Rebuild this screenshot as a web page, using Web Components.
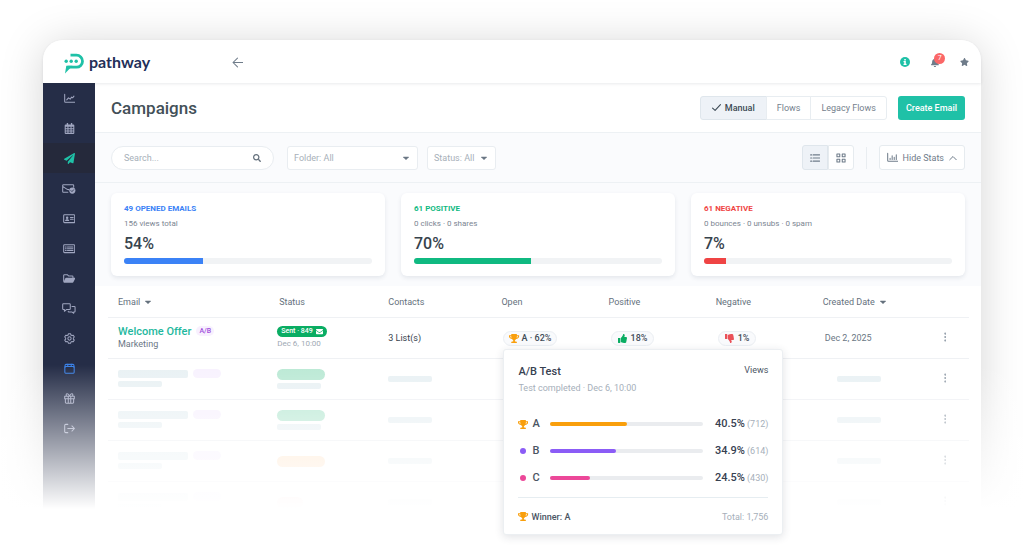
<!DOCTYPE html>
<html lang="en">
<head>
<meta charset="utf-8">
<meta name="viewport" content="width=device-width, initial-scale=1">
<title>Campaigns</title>
<style>
    body {
        margin: 0;
        background: #fff;
        font-family: Roboto, sans-serif;
        font-size: 9px;
        line-height: 12px;
        color: #6b7785;
    }
</style>
</head>
<body>
<campaign-app></campaign-app>

<script>
const ICONS = {
    plane: ['0 0 512 512', '<path fill="currentColor" d="M476 3.2L12.5 270.6c-18.1 10.4-15.8 35.6 2.2 43.2L121 358.4l287.3-253.2c5.5-4.9 13.3 2.6 8.6 8.3L176 407v80.5c0 23.6 28.5 32.9 42.5 15.8L282 426l124.6 52.2c14.2 6 30.4-2.9 33-18.2l72-432C515 7.8 493.3-6.8 476 3.2z"/>'],
    bell: ['0 0 448 512', '<path fill="currentColor" d="M224 512c35.3 0 64-28.7 64-64H160c0 35.3 28.7 64 64 64zm215.4-149.7c-19.3-20.8-55.5-52-55.5-154.3 0-77.7-54.5-139.9-127.9-155.2V32c0-17.7-14.3-32-32-32s-32 14.3-32 32v20.8C118.6 68.1 64.1 130.3 64.1 208c0 102.3-36.2 133.5-55.5 154.3-6 6.4-8.7 14.2-8.6 21.7.1 16.4 13 32 32.1 32h383.8c19.1 0 32-15.6 32.1-32 .1-7.5-2.6-15.3-8.6-21.7z"/>'],
    star: ['0 0 576 512', '<path fill="currentColor" d="M259.3 17.8L194 150.2 47.9 171.5c-26.2 3.8-36.7 36.1-17.7 54.6l105.7 103-25 145.5c-4.5 26.3 23.2 46 46.4 33.7L288 439.6l130.7 68.7c23.2 12.2 50.9-7.4 46.4-33.7l-25-145.5 105.7-103c19-18.5 8.5-50.8-17.7-54.6L382 150.2 316.7 17.8c-11.7-23.6-45.6-23.9-57.4 0z"/>'],
    trophy: ['0 0 576 512', '<path fill="currentColor" d="M552 64H448V24c0-13.3-10.7-24-24-24H152c-13.3 0-24 10.7-24 24v40H24C10.7 64 0 74.7 0 88v56c0 35.7 22.5 72.4 61.9 100.7 31.5 22.7 69.8 37.1 110 41.7C203.3 338.5 240 360 240 360v72h-48c-35.3 0-64 20.7-64 56v12c0 6.6 5.4 12 12 12h296c6.6 0 12-5.4 12-12v-12c0-35.3-28.7-56-64-56h-48v-72s36.7-21.5 68.1-73.6c40.3-4.6 78.6-19 110-41.7 39.3-28.3 61.9-65 61.9-100.7V88c0-13.3-10.7-24-24-24zM99.3 192.8C74.9 175.2 64 155.6 64 144v-16h64.2c1 32.6 5.8 61.2 12.8 86.2-15.1-5.2-29.2-12.4-41.7-21.4zM512 144c0 16.1-17.7 36.1-35.3 48.8-12.5 9-26.7 16.2-41.8 21.4 7-25 11.8-53.6 12.8-86.2H512v16z"/>'],
    up: ['0 0 512 512', '<path fill="currentColor" d="M104 224H24c-13.3 0-24 10.7-24 24v240c0 13.3 10.7 24 24 24h80c13.3 0 24-10.7 24-24V248c0-13.3-10.7-24-24-24zM384 81.5c0 42.4-26 66.2-33.3 94.5h101.7c33.4 0 59.4 27.7 59.6 58.1.1 17.9-7.5 37.2-19.4 49.2l-.1.1c9.8 23.3 8.2 56-9.3 79.5 8.7 25.9-.1 57.7-16.4 74.8 4.3 17.6 2.2 32.6-6.1 44.6C440.2 511.6 389.6 512 346.8 512H344c-48.3 0-87.8-17.6-119.6-31.7-16-7.1-36.8-15.9-52.7-16.2-6.5-.1-11.7-5.5-11.7-12V238.3c0-3.2 1.3-6.3 3.6-8.5 39.6-39.1 56.6-80.6 89.1-113.1 14.8-14.8 20.2-37.2 25.4-58.9C282.5 39.3 291.8 0 312 0c24 0 72 8 72 81.5z"/>'],
    search: ['0 0 512 512', '<path fill="currentColor" d="M505 442.7L405.3 343c-4.5-4.5-10.6-7-17-7H372c27.6-35.3 44-79.7 44-128C416 93.1 322.9 0 208 0S0 93.1 0 208s93.1 208 208 208c48.3 0 92.7-16.4 128-44v16.3c0 6.4 2.5 12.5 7 17l99.7 99.7c9.4 9.4 24.6 9.4 33.9 0l28.3-28.3c9.4-9.4 9.4-24.6.1-34zM208 336c-70.7 0-128-57.2-128-128 0-70.7 57.2-128 128-128 70.7 0 128 57.2 128 128 0 70.7-57.2 128-128 128z"/>'],
    line: ['0 0 16 16', '<path d="M1 2v10.5a1 1 0 0 0 1 1h13.5M4 10l2.5-3 2.5 2 2-3 1.5 1L14.500 4.500"/>'],
    bars: ['0 0 16 16', '<path d="M1 2v10.5a1 1 0 0 0 1 1h13.5M4.500 11V9M7.500 11V5.500M10.500 11V7.500M13.500 11V4"/>'],
    calendar: ['0 0 16 16', '<path fill="currentColor" stroke="none" fill-rule="evenodd" d="M4 0h2v2h4V0h2v2h1.500a1.500 1.500 0 0 1 1.500 1.500v11a1.500 1.500 0 0 1-1.500 1.500h-11A1.500 1.500 0 0 1 1 14.500v-11A1.500 1.500 0 0 1 2.500 2H4zM2.500 5.500v2h2.500v-2zm4 0v2h3v-2zm4.500 0v2h2.500v-2zM2.500 9v2h2.500V9zm4 0v2h3V9zM11 9v2h2.500V9zM2.500 12.300v2h2.500v-2zm4 0v2h3v-2zm4.500 0v2h2.500v-2z"/>'],
    mailcheck: ['0 0 20 16', '<path d="M8.500 13.500H2.200A1.200 1.200 0 0 1 1 12.300V3.700a1.200 1.200 0 0 1 1.200-1.200h13.600A1.200 1.200 0 0 1 17 3.700V6M1 5l6.500 4.200c1 .5 2 .5 2.500.2"/><circle cx="15" cy="11" r="4.500" fill="currentColor" stroke="none"/><path d="M13 11l1.500 1.500L17 9.800" style="stroke:#252d47;stroke-width:1.2"/>'],
    card: ['0 0 18 16', '<rect x="1" y="2.500" width="16" height="11.500" rx="1.200"/><circle cx="6" cy="6.800" r="1.800" fill="currentColor" stroke="none"/><path fill="currentColor" stroke="none" d="M3 11.700c0-2 1.200-2.700 3-2.700s3 .7 3 2.700z"/><path d="M10.800 6.500h4M10.800 9h4"/>'],
    list: ['0 0 18 16', '<rect x="1" y="2.500" width="16" height="11.500" rx="1.200"/><path d="M6.500 5.700h8M6.500 8.300h8M6.500 10.900h8M3.500 5.700h1.200M3.500 8.300h1.200M3.500 10.900h1.200"/>'],
    folder: ['0 0 18 16', '<path d="M1 12V3.500a1 1 0 0 1 1-1h4.200L8 4.300h5.500a1 1 0 0 1 1 1V7"/><path fill="currentColor" stroke="none" d="M4.600 6.800h12.400c.8 0 1.200.6.800 1.300l-2.600 5c-.3.500-.7.900-1.300.9H1.600c-.7 0-1.100-.6-.7-1.300l2.500-5c.2-.5.600-.9 1.200-.9z"/>'],
    chat: ['0 0 20 16', '<path d="M2 1h9a1 1 0 0 1 1 1v6.500a1 1 0 0 1-1 1H6.500L3.500 12V9.500H2a1 1 0 0 1-1-1V2a1 1 0 0 1 1-1z"/><path d="M14.500 5H18a1 1 0 0 1 1 1v6a1 1 0 0 1-1 1h-1v2l-2.700-2H10a1 1 0 0 1-1-1"/>'],
    gear: ['0 0 16 16', '<path d="M6.500 1h3l.6 1.900 1.400.8 2-.4 1.500 2.500L13.600 7.300v1.500l1.400 1.500-1.500 2.500-2-.4-1.400.8L9.500 15h-3l-.6-1.800-1.400-.8-2 .4L1 10.300l1.400-1.500V7.300L1 5.800l1.500-2.500 2 .4 1.400-.8z"/><circle cx="8" cy="8" r="2.400"/>'],
    box: ['0 0 16 16', '<rect x="1.200" y="5.200" width="13.600" height="9.600" rx="1.200"/><path d="M1.500 6V3.500A1.500 1.500 0 0 1 3 2h10a1.500 1.500 0 0 1 1.500 1.500V6M5.500 5V1.500M10.500 5V1.500"/>'],
    gift: ['0 0 16 16', '<path d="M2 8.500v5a1.300 1.300 0 0 0 1.300 1.300h9.400A1.300 1.300 0 0 0 14 13.500v-5M1 4.800h14v3.700H1zM6.200 5v9.600M9.800 5v9.600M8 4.500C7 1.800 5.500.9 4.300 1.200c-1.500.4-1.500 2.400-.3 3.400M8 4.500c1-2.700 2.500-3.600 3.700-3.300 1.500.4 1.500 2.400.3 3.400"/>'],
    exit: ['0 0 16 16', '<path d="M5.500 2H2.500A1.500 1.500 0 0 0 1 3.500v9A1.500 1.500 0 0 0 2.500 14h3M5.500 8h9.500M11.500 4.300L15.200 8l-3.700 3.700"/>'],
    back: ['0 0 16 16', '<path d="M15.500 8H1.500M8 1.500L1.500 8 8 14.500"/>'],
    info: ['0 0 16 16', '<circle cx="8" cy="8" r="8" fill="currentColor" stroke="none"/><path fill="#fff" stroke="none" d="M6.800 3h2.500v2.400H6.800zM5.600 6.500h3.700v4.300h1.200v1.900H5.600v-1.900h1.200V8.400H5.600z"/>'],
    check: ['0 0 16 16', '<path d="M1 9l4.500 4L15 3" style="stroke-width:2"/>'],
    rows: ['0 0 16 16', '<path d="M5 3h10.500M5 8h10.500M5 13h10.500M1 3h1.700M1 8h1.700M1 13h1.700" style="stroke-width:1.7"/>'],
    grid: ['0 0 16 16', '<path d="M1.500 1.500h4.500v4.500H1.500zM10 1.500h4.500v4.500H10zM1.500 10h4.500v4.500H1.500zM10 10h4.500v4.500H10z" style="stroke-width:1.7"/>'],
    chevron: ['0 0 16 16', '<path d="M1.500 11.500L8 5l6.500 6.500" style="stroke-width:2"/>'],
    caret: ['0 0 10 10', '<path fill="currentColor" stroke="none" d="M.8 2.800h8.400c.5 0 .7.500.4.900L5.600 7.800a.9.900 0 0 1-1.200 0L.4 3.700c-.3-.4-.1-.9.400-.9z"/>'],
    mail: ['0 0 16 16', '<path fill="currentColor" stroke="none" d="M1.500 2h13A1.500 1.500 0 0 1 16 3.500v.8L8.600 9.500a1 1 0 0 1-1.200 0L0 4.300v-.8A1.500 1.500 0 0 1 1.500 2zM0 6l6.800 4.700a2 2 0 0 0 2.400 0L16 6v6.500a1.500 1.500 0 0 1-1.500 1.500h-13A1.500 1.500 0 0 1 0 12.500z"/>'],
    dots: ['0 0 4 16', '<g fill="currentColor" stroke="none"><circle cx="2" cy="2.500" r="1.700"/><circle cx="2" cy="8" r="1.700"/><circle cx="2" cy="13.500" r="1.700"/></g>']
};

class AppIcon extends HTMLElement {
    constructor() {
        super();
        this.attachShadow({mode: 'open'});
    }

    connectedCallback() {
        const size = this.getAttribute('size') || 12;
        const [box, shape] = ICONS[this.getAttribute('name')];
        this.shadowRoot.innerHTML = `
            <style>
                :host { display: inline-flex; flex: none; }
                :host([flip]) svg { transform: scaleY(-1); }
                svg { display: block; height: ${size}px; width: auto; }
                path, rect, circle { stroke-width: 1.5; }
            </style>
            <svg viewBox="${box}" fill="none" ${box.includes('512') ? '' : 'stroke="currentColor"'} stroke-linecap="round" stroke-linejoin="round" aria-hidden="true">${shape}</svg>
        `;
    }
}

class TopBar extends HTMLElement {
    constructor() {
        super();
        this.attachShadow({mode: 'open'});
        this.shadowRoot.innerHTML = `
            <style>
                :host {
                    display: flex;
                    align-items: center;
                    height: 43px;
                    padding: 1px 12px 0 21px;
                    box-sizing: border-box;
                    background: #fff;
                    border-radius: 20px 20px 0 0;
                    box-shadow: 0 1px 3px rgba(40, 50, 70, .1);
                    position: relative;
                }
                .logo {
                    display: flex;
                    align-items: center;
                    gap: 5px;
                    width: 168px;
                    color: #232f58;
                    font: 700 16px/24px Lato, sans-serif;
                    text-decoration: none;
                }
                .mark { width: 20px; height: 21px; padding-top: 3px; }
                button {
                    display: flex;
                    padding: 0;
                    border: 0;
                    background: none;
                    color: #6f7c8a;
                    font: inherit;
                    position: relative;
                }
                .right {
                    display: flex;
                    align-items: center;
                    gap: 21px;
                    margin-left: auto;
                }
                .info { color: #1fc1a7; }
                .badge {
                    position: absolute;
                    left: 3px;
                    bottom: 3px;
                    width: 11px;
                    height: 11px;
                    border-radius: 50%;
                    background: #fb6767;
                    color: #fff;
                    font-size: 7px;
                    line-height: 11px;
                    text-align: center;
                }
            </style>
            <a class="logo" href="#">
                <svg class="mark" viewBox="0 0 20 21" fill="none" stroke="#1fc1a7" stroke-width="2.8" aria-hidden="true">
                    <path d="M6.500 2.200h6a6 6 0 0 1 0 12H3.500"/>
                    <path fill="#1fc1a7" stroke="none" d="M2.300 12.800h6.200L1 20.500z"/>
                    <g fill="#1fc1a7" stroke="none"><circle cx="2.200" cy="8.200" r="1.700"/><circle cx="7.200" cy="8.200" r="1.700"/><circle cx="12.200" cy="8.200" r="1.700"/></g>
                </svg>
                pathway
            </a>
            <button aria-label="Back"><app-icon name="back" size="11"></app-icon></button>
            <div class="right">
                <button class="info" aria-label="Help"><app-icon name="info" size="10"></app-icon></button>
                <button aria-label="Notifications"><app-icon name="bell" size="9"></app-icon><span class="badge">7</span></button>
                <button aria-label="Favorites"><app-icon name="star" size="8"></app-icon></button>
            </div>
        `;
    }
}

class SideNav extends HTMLElement {
    constructor() {
        super();
        this.attachShadow({mode: 'open'});
        const items = [
            ['line', 'Dashboard'], ['calendar', 'Calendar'], ['plane', 'Campaigns'],
            ['mailcheck', 'Verification'], ['card', 'Contacts'], ['list', 'Forms'],
            ['folder', 'Files'], ['chat', 'Messages'], ['gear', 'Settings'],
            ['box', 'Apps'], ['gift', 'Rewards'], ['exit', 'Sign out']
        ];
        this.shadowRoot.innerHTML = `
            <style>
                :host { display: block; background: #252d47; }
                a {
                    display: flex;
                    align-items: center;
                    justify-content: center;
                    height: 30px;
                    color: #a0a6c0;
                }
                .plane { background: #25293b; color: #1fc1a7; }
                .box { color: #3b82e8; }
            </style>
            <nav>${items.map(([icon, label]) => `<a class="${icon}" href="#" aria-label="${label}"><app-icon name="${icon}" size="11"></app-icon></a>`).join('')}</nav>
        `;
    }
}

class TitleBar extends HTMLElement {
    constructor() {
        super();
        this.attachShadow({mode: 'open'});
        this.shadowRoot.innerHTML = `
            <style>
                :host {
                    display: flex;
                    align-items: center;
                    height: 49px;
                    padding: 0 16px;
                    border-bottom: 1px solid #edf1f4;
                }
                h1 {
                    flex: 1;
                    margin: 0;
                    color: #435058;
                    font-size: 17px;
                    font-weight: 500;
                    line-height: 24px;
                }
                .tabs { display: flex; margin-right: 12px; }
                button {
                    display: flex;
                    align-items: center;
                    gap: 4px;
                    height: 24px;
                    padding: 0 10px;
                    border: 1px solid #e8edf1;
                    margin-left: -1px;
                    background: #fff;
                    color: #75818d;
                    font: inherit;
                }
                .tabs button:first-child { border-radius: 3px 0 0 3px; }
                .tabs button:last-child { border-radius: 0 3px 3px 0; }
                .tabs .on { padding: 0 11px; background: #eef2f7; border-color: #dfe6ec; color: #3d4a55; font-weight: 500; }
                .create {
                    padding: 0 8px;
                    border: 0;
                    border-radius: 3px;
                    background: #1fc1a7;
                    color: #fff;
                    font-weight: 500;
                }
            </style>
            <h1>Campaigns</h1>
            <div class="tabs">
                <button class="on"><app-icon name="check" size="9"></app-icon>Manual</button>
                <button>Flows</button>
                <button>Legacy Flows</button>
            </div>
            <button class="create">Create Email</button>
        `;
    }
}

class FilterBar extends HTMLElement {
    constructor() {
        super();
        this.attachShadow({mode: 'open'});
        this.shadowRoot.innerHTML = `
            <style>
                :host {
                    display: flex;
                    align-items: center;
                    height: 49px;
                    padding: 0 16px;
                    border-bottom: 1px solid #edf1f4;
                    background: #fafbfd;
                }
                .search, .pick {
                    display: grid;
                    align-items: center;
                    box-sizing: border-box;
                    height: 24px;
                    border: 1px solid #e9edf1;
                    border-radius: 3px;
                    background: #fff;
                }
                .search { width: 163px; margin-right: 13px; border-radius: 12px; color: #65717d; }
                .folder { width: 131px; margin-right: 9px; }
                .status { width: 69px; }
                .search > *, .pick > * { grid-area: 1 / 1; }
                app-icon { pointer-events: none; }
                .search app-icon { justify-self: end; margin-right: 12px; }
                .pick app-icon { justify-self: end; margin-right: 8px; }
                input, select {
                    width: 100%;
                    height: 22px;
                    padding: 0 12px;
                    border: 0;
                    background: none;
                    box-sizing: border-box;
                    color: #a7b0b9;
                    font: inherit;
                    appearance: none;
                    outline: none;
                }
                select { padding: 0 6px; }
                input::placeholder { color: #a7b0b9; }
                button {
                    display: flex;
                    align-items: center;
                    justify-content: center;
                    height: 25px;
                    padding: 0;
                    border: 1px solid #e6ebef;
                    background: #fff;
                    color: #6f7c8a;
                    font: inherit;
                }
                .view { display: flex; margin-left: auto; }
                .view button { width: 26px; border-radius: 0 3px 3px 0; }
                .view .on { border-color: #dfe6ec; border-radius: 3px 0 0 3px; background: #eef2f7; }
                .rule { width: 1px; height: 22px; margin: 0 12px; background: #e9edf1; }
                .stats { gap: 5px; padding: 0 7px; border-radius: 3px; }
            </style>
            <div class="search">
                <input type="text" placeholder="Search..." aria-label="Search">
                <app-icon name="search" size="8"></app-icon>
            </div>
            <div class="pick folder">
                <select aria-label="Folder"><option>Folder: All</option></select>
                <app-icon name="caret" size="6"></app-icon>
            </div>
            <div class="pick status">
                <select aria-label="Status"><option>Status: All</option></select>
                <app-icon name="caret" size="6"></app-icon>
            </div>
            <div class="view">
                <button class="on" aria-label="List view"><app-icon name="rows" size="10"></app-icon></button>
                <button aria-label="Grid view"><app-icon name="grid" size="10"></app-icon></button>
            </div>
            <span class="rule"></span>
            <button class="stats"><app-icon name="bars" size="11"></app-icon>Hide Stats<app-icon name="chevron" size="8"></app-icon></button>
        `;
    }
}

class StatCard extends HTMLElement {
    constructor() {
        super();
        this.attachShadow({mode: 'open'});
    }

    connectedCallback() {
        this.shadowRoot.innerHTML = `
            <style>
                :host {
                    display: block;
                    flex: 1;
                    padding: 10px 13px 12px;
                    border-radius: 6px;
                    background: #fff;
                    box-shadow: 0 2px 4px rgba(40, 60, 90, .1);
                }
                .label { color: ${this.getAttribute('color')}; font-size: 8px; font-weight: 700; }
                .note { margin-top: 3px; font-size: 8px; color: #7b8592; }
                .value {
                    margin-top: 5px;
                    color: #37434d;
                    font-size: 16px;
                    font-weight: 500;
                    line-height: 18px;
                }
                .track {
                    height: 6px;
                    margin-top: 5px;
                    border-radius: 3px;
                    overflow: hidden;
                    background: #f1f3f5;
                }
                .fill {
                    width: ${this.getAttribute('fill')}%;
                    height: 100%;
                    background: ${this.getAttribute('color')};
                }
            </style>
            <div class="label">${this.getAttribute('label')}</div>
            <div class="note">${this.getAttribute('note')}</div>
            <div class="value"><slot></slot></div>
            <div class="track"><div class="fill"></div></div>
        `;
    }
}

class RatePill extends HTMLElement {
    constructor() {
        super();
        this.attachShadow({mode: 'open'});
        this.shadowRoot.innerHTML = `
            <style>
                :host {
                    display: inline-flex;
                    align-items: center;
                    gap: 4px;
                    height: 13px;
                    padding: 0 6px;
                    border: 1px solid #ebeff3;
                    border-radius: 8px;
                    background: #f9fafc;
                    color: #414c58;
                    font-weight: 500;
                    white-space: nowrap;
                }
                :host([winner]) { gap: 2px; padding: 0 5px; }
            </style>
            <slot></slot>
        `;
    }
}

class AbPopover extends HTMLElement {
    constructor() {
        super();
        this.attachShadow({mode: 'open'});
        const variants = [
            ['A', '#f99f0c', 50, '40.5%', 712],
            ['B', '#8b5cf6', 43, '34.9%', 614],
            ['C', '#ec4899', 26, '24.5%', 430]
        ];
        this.shadowRoot.innerHTML = `
            <style>
                :host {
                    display: block;
                    box-sizing: border-box;
                    width: 280px;
                    padding: 14px 14px 11px;
                    border: 1px solid #eceff2;
                    border-radius: 3px;
                    background: #fff;
                    box-shadow: 0 2px 8px rgba(40, 50, 70, .14);
                    color: #4b5563;
                    font-size: 9px;
                    font-weight: 400;
                    line-height: 12px;
                    white-space: nowrap;
                }
                header, footer { display: flex; justify-content: space-between; }
                h2 { margin: 0; font-size: 11px; font-weight: 500; line-height: 16px; color: #374151; }
                .muted { color: #a6afba; }
                header .muted { margin-top: 2px; }
                .list { margin: 17px 0 5px; }
                .row { display: flex; align-items: center; height: 27px; }
                .mark { display: flex; justify-content: center; width: 10px; margin-right: 4px; }
                .trophy { color: #f99f0c; }
                .dot { width: 6px; height: 6px; border-radius: 50%; }
                .name { width: 18px; font-size: 11px; font-weight: 500; }
                .track { flex: 1; height: 4px; border-radius: 2px; background: #eaecef; }
                .fill { height: 100%; border-radius: 2px; }
                .num { width: 65px; text-align: right; }
                b { font-size: 11px; font-weight: 500; color: #374151; }
                footer { padding-top: 13px; border-top: 1px solid #e6edf1; }
                .winner { display: flex; align-items: center; gap: 3px; font-weight: 500; }
            </style>
            <header>
                <div><h2>A/B Test</h2><div class="muted">Test completed · Dec 6, 10:00</div></div>
                <span>Views</span>
            </header>
            <div class="list">${variants.map(([name, color, width, rate, views]) => `
                <div class="row">
                    <span class="mark">${name === 'A' ? '<app-icon class="trophy" name="trophy" size="9"></app-icon>' : `<span class="dot" style="background:${color}"></span>`}</span>
                    <span class="name">${name}</span>
                    <div class="track"><div class="fill" style="width:${width}%;background:${color}"></div></div>
                    <span class="num"><b>${rate}</b> <span class="muted">(${views})</span></span>
                </div>`).join('')}
            </div>
            <footer>
                <span class="winner"><app-icon class="trophy" name="trophy" size="9"></app-icon>Winner: A</span>
                <span class="muted">Total: 1,756</span>
            </footer>
        `;
    }
}

class CampaignTable extends HTMLElement {
    constructor() {
        super();
        this.attachShadow({mode: 'open'});
        const columns = [159, 109, 113, 107, 107, 107, 110, 48];
        const pending = ['sent', 'sent', 'draft', 'failed'];
        const menu = '<td class="menu"><button aria-label="More"><app-icon name="dots" size="10"></app-icon></button></td>';
        this.shadowRoot.innerHTML = `
            <style>
                :host { display: block; padding: 0 12px 0 13px; background: #fff; }
                table { width: 100%; table-layout: fixed; border-collapse: collapse; }
                th, td {
                    padding: 0 0 0 12px;
                    border-bottom: 1px solid #eff1f4;
                    text-align: left;
                    vertical-align: middle;
                    white-space: nowrap;
                }
                th { height: 31px; font-weight: 400; color: #65717d; }
                td { height: 40px; }
                th:first-child, td:nth-child(-n+2) { padding-left: 10px; }
                td:first-child { padding-bottom: 2px; height: 38px; }
                td:nth-child(n+4) { padding-left: 14px; }
                button { padding: 0; border: 0; background: none; color: inherit; font: inherit; }
                th button { display: flex; align-items: center; gap: 5px; }
                td.menu { padding-left: 23px; color: #98a2ae; }
                .menu app-icon { display: flex; }
                .line { display: flex; align-items: center; gap: 5px; }
                .line a { color: #1fb89e; font-size: 11px; font-weight: 500; line-height: 13px; text-decoration: none; }
                .ab { padding: 0 3px; border-radius: 5px; background: #f8f0fe; color: #a04fdc; font-size: 7px; font-weight: 500; line-height: 10px; }
                .sent-tag {
                    display: inline-flex;
                    align-items: center;
                    gap: 3px;
                    height: 11px;
                    padding: 0 4px;
                    border-radius: 6px;
                    background: #0aad63;
                    color: #fff;
                    font-size: 7px;
                    font-weight: 500;
                    line-height: 11px;
                    vertical-align: top;
                }
                .small { font-size: 8px; color: #a0a9b4; }
                .strong { color: #37434d; }
                .anchor { display: flex; width: max-content; position: relative; }
                .anchor ab-popover { position: absolute; z-index: 3; left: 0; top: calc(100% + 3px); }
                .sk { display: block; width: 44px; height: 6px; border-radius: 2px; background: #e9f1f4; }
                .sk.wide { width: 70px; height: 8px; }
                .sk.tag { width: 28px; height: 9px; border-radius: 5px; background: #f8f2fe; }
                .sk.pill { width: 48px; height: 11px; border-radius: 6px; background: #bbe9d5; }
                .sk.draft { background: #ffe6cc; }
                .sk.failed { width: 26px; background: #fdd; }
                .sk + .sk, .line + .sk { margin-top: 3px; }
                .line .sk + .sk { margin-top: 0; }
                .sk.date { margin-left: 12px; }
            </style>
            <table>
                <colgroup>${columns.map(width => `<col style="width:${width}px">`).join('')}</colgroup>
                <thead>
                    <tr>
                        <th><button>Email <app-icon name="caret" size="6"></app-icon></button></th>
                        <th>Status</th>
                        <th>Contacts</th>
                        <th>Open</th>
                        <th>Positive</th>
                        <th>Negative</th>
                        <th><button>Created Date <app-icon name="caret" size="6"></app-icon></button></th>
                        <th></th>
                    </tr>
                </thead>
                <tbody>
                    <tr>
                        <td><div class="line"><a href="#">Welcome Offer</a><span class="ab">A/B</span></div>Marketing</td>
                        <td><div><span class="sent-tag">Sent · 849 <app-icon name="mail" size="7"></app-icon></span></div><div class="small">Dec 6, 10:00</div></td>
                        <td class="strong">3 List(s)</td>
                        <td><div class="anchor"><rate-pill winner><app-icon name="trophy" size="9" style="color:#f99f0c"></app-icon>A · 62%</rate-pill><ab-popover></ab-popover></div></td>
                        <td><div class="anchor"><rate-pill><app-icon name="up" size="9" style="color:#0aad63"></app-icon>18%</rate-pill></div></td>
                        <td><div class="anchor"><rate-pill><app-icon name="up" flip size="9" style="color:#ea5158"></app-icon>1%</rate-pill></div></td>
                        <td>Dec 2, 2025</td>
                        ${menu}
                    </tr>
                    ${pending.map(state => `
                    <tr>
                        <td><div class="line"><span class="sk wide"></span><span class="sk tag"></span></div><span class="sk"></span></td>
                        <td><span class="sk pill ${state}"></span>${state === 'sent' ? '<span class="sk"></span>' : ''}</td>
                        <td><span class="sk"></span></td>
                        <td></td>
                        <td></td>
                        <td></td>
                        <td><span class="sk date"></span></td>
                        ${menu}
                    </tr>`).join('')}
                </tbody>
            </table>
        `;
    }
}

class CampaignApp extends HTMLElement {
    constructor() {
        super();
        this.attachShadow({mode: 'open'});
        this.shadowRoot.innerHTML = `
            <style>
                :host {
                    display: flex;
                    min-height: 100vh;
                    box-sizing: border-box;
                    padding: 40px 43px 0;
                    overflow: hidden;
                    position: relative;
                }
                /* everything but the popover fades into the page */
                :host::after {
                    content: "";
                    position: absolute;
                    z-index: 2;
                    inset: auto 0 0;
                    height: 180px;
                    background: linear-gradient(rgba(255, 255, 255, 0), #fff 80%);
                    pointer-events: none;
                }
                .window {
                    flex: 1;
                    min-width: 0;
                    display: flex;
                    flex-direction: column;
                    border-radius: 20px 20px 0 0;
                    background: #fff;
                    box-shadow: 0 4px 44px rgba(0, 0, 0, .17);
                }
                .body { flex: 1; display: flex; }
                side-nav { width: 52px; }
                main { flex: 1; min-width: 0; }
                .stats { display: flex; gap: 16px; padding: 10px 16px; background: #fafbfd; }
            </style>
            <div class="window">
                <top-bar></top-bar>
                <div class="body">
                    <side-nav></side-nav>
                    <main>
                        <title-bar></title-bar>
                        <filter-bar></filter-bar>
                        <section class="stats">
                            <stat-card color="#3b82f6" fill="32" label="49 OPENED EMAILS" note="156 views total">54%</stat-card>
                            <stat-card color="#10b981" fill="47" label="61 POSITIVE" note="0 clicks · 0 shares">70%</stat-card>
                            <stat-card color="#ef4444" fill="9" label="61 NEGATIVE" note="0 bounces · 0 unsubs · 0 spam">7%</stat-card>
                        </section>
                        <campaign-table></campaign-table>
                    </main>
                </div>
            </div>
        `;
    }
}

customElements.define('app-icon', AppIcon);
customElements.define('top-bar', TopBar);
customElements.define('side-nav', SideNav);
customElements.define('title-bar', TitleBar);
customElements.define('filter-bar', FilterBar);
customElements.define('stat-card', StatCard);
customElements.define('rate-pill', RatePill);
customElements.define('ab-popover', AbPopover);
customElements.define('campaign-table', CampaignTable);
customElements.define('campaign-app', CampaignApp);
</script>
</body>
</html>
